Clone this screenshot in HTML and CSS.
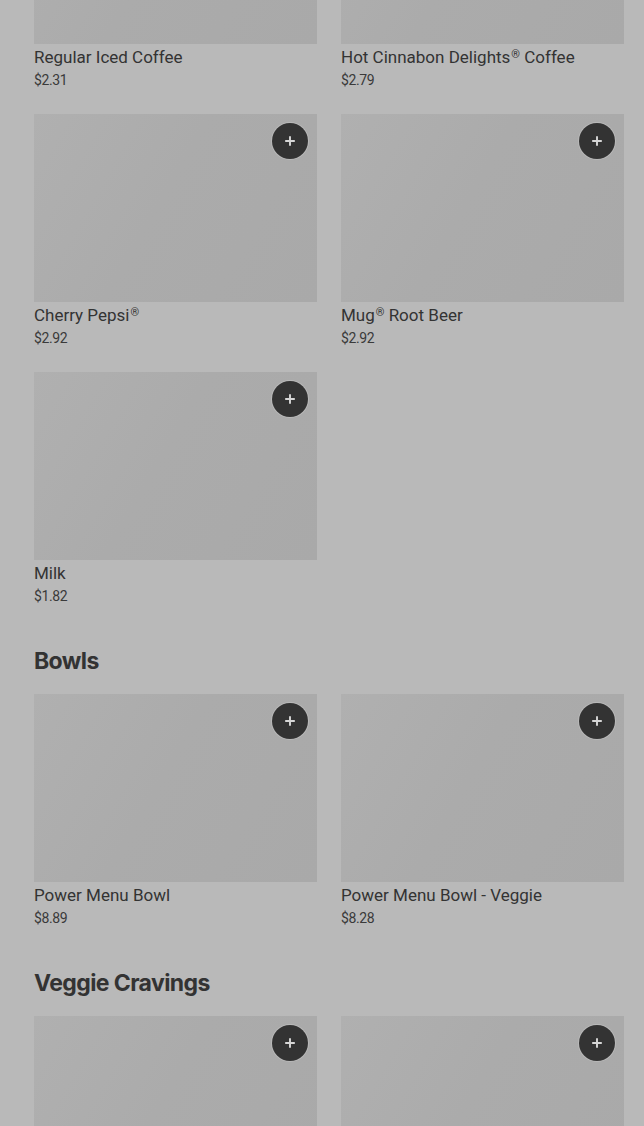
FILE: index.html
```html
<!DOCTYPE html>
<html lang="en">
<head>
<meta charset="utf-8">
<title>Menu</title>
<link rel="stylesheet" href="styles.css">
</head>
<body>
<main class="menu">
  <section class="section">
    <div class="grid">
      <div class="card">
        <div class="thumb"><button class="add" aria-label="Add"><svg viewBox="0 0 16 16"><path d="M8 2.5v11M2.5 8h11"/></svg></button></div>
        <div class="name">Regular Iced Coffee</div>
        <div class="price">$2.31</div>
      </div>
      <div class="card">
        <div class="thumb"><button class="add" aria-label="Add"><svg viewBox="0 0 16 16"><path d="M8 2.5v11M2.5 8h11"/></svg></button></div>
        <div class="name">Hot Cinnabon Delights<span class="reg">®</span> Coffee</div>
        <div class="price">$2.79</div>
      </div>
      <div class="card">
        <div class="thumb"><button class="add" aria-label="Add"><svg viewBox="0 0 16 16"><path d="M8 2.5v11M2.5 8h11"/></svg></button></div>
        <div class="name">Cherry Pepsi<span class="reg">®</span></div>
        <div class="price">$2.92</div>
      </div>
      <div class="card">
        <div class="thumb"><button class="add" aria-label="Add"><svg viewBox="0 0 16 16"><path d="M8 2.5v11M2.5 8h11"/></svg></button></div>
        <div class="name">Mug<span class="reg">®</span> Root Beer</div>
        <div class="price">$2.92</div>
      </div>
      <div class="card">
        <div class="thumb"><button class="add" aria-label="Add"><svg viewBox="0 0 16 16"><path d="M8 2.5v11M2.5 8h11"/></svg></button></div>
        <div class="name">Milk</div>
        <div class="price">$1.82</div>
      </div>
    </div>
  </section>
  <section class="section">
    <h2 class="heading">Bowls</h2>
    <div class="grid">
      <div class="card">
        <div class="thumb"><button class="add" aria-label="Add"><svg viewBox="0 0 16 16"><path d="M8 2.5v11M2.5 8h11"/></svg></button></div>
        <div class="name">Power Menu Bowl</div>
        <div class="price">$8.89</div>
      </div>
      <div class="card">
        <div class="thumb"><button class="add" aria-label="Add"><svg viewBox="0 0 16 16"><path d="M8 2.5v11M2.5 8h11"/></svg></button></div>
        <div class="name">Power Menu Bowl - Veggie</div>
        <div class="price">$8.28</div>
      </div>
    </div>
  </section>
  <section class="section">
    <h2 class="heading">Veggie Cravings</h2>
    <div class="grid">
      <div class="card">
        <div class="thumb"><button class="add" aria-label="Add"><svg viewBox="0 0 16 16"><path d="M8 2.5v11M2.5 8h11"/></svg></button></div>
      </div>
      <div class="card">
        <div class="thumb"><button class="add" aria-label="Add"><svg viewBox="0 0 16 16"><path d="M8 2.5v11M2.5 8h11"/></svg></button></div>
      </div>
    </div>
  </section>
</main>
</body>
</html>
```
FILE: styles.css
```css
html, body {
  margin: 0;
  padding: 0;
  background: #b9b9b9;
  overflow: hidden;
}
body {
  font-family: Roboto, "Liberation Sans", sans-serif;
  color: #333333;
}
.menu {
  margin-top: -144px;
  padding: 0 20px 0 34px;
}
.section {
  margin: 0;
}
.heading {
  font-family: Inter, "Liberation Sans", sans-serif;
  font-weight: 700;
  font-size: 23px;
  line-height: 32px;
  letter-spacing: -0.6px;
  color: #333333;
  margin: 39px 0 17px;
}
.grid {
  display: grid;
  grid-template-columns: 283px 283px;
  column-gap: 24px;
  row-gap: 24px;
}
.card {
  display: flex;
  flex-direction: column;
}
.thumb {
  position: relative;
  height: 188px;
  background: linear-gradient(120deg, #b0b0b0 0%, #ababab 45%, #a9a9a9 100%);
}
.add {
  position: absolute;
  top: 9px;
  right: 9px;
  width: 36px;
  height: 36px;
  border-radius: 50%;
  border: none;
  padding: 0;
  background: #333333;
  box-shadow: 0 0 0 1px rgba(200,200,200,0.5);
  display: flex;
  align-items: center;
  justify-content: center;
  cursor: pointer;
}
.add svg {
  width: 14px;
  height: 14px;
  fill: none;
  stroke: #d6d6d6;
  stroke-width: 2.2;
}
.name {
  margin-top: 2px;
  font-size: 17px;
  line-height: 23px;
  font-weight: 400;
  color: #333333;
}
.reg {
  font-size: 11px;
  line-height: 0;
  vertical-align: 5px;
  margin-left: 1px;
}
.price {
  margin-top: 1px;
  font-size: 14px;
  line-height: 20px;
  letter-spacing: -0.4px;
  color: #3a3a3a;
}
```
